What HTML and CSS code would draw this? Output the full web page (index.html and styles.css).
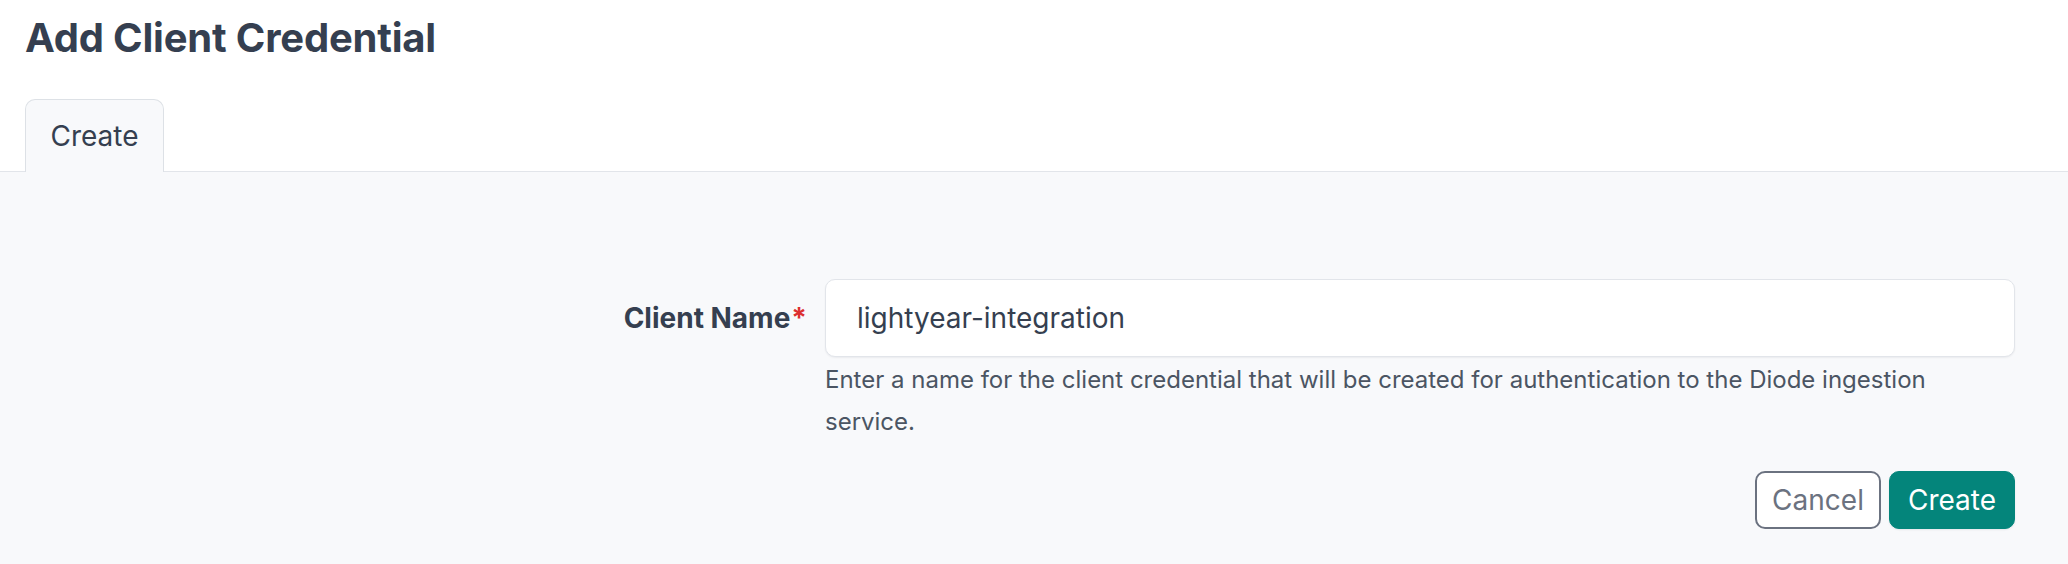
FILE: index.html
```html
<!DOCTYPE html>
<html lang="en">
<head>
<meta charset="utf-8">
<title>Add Client Credential</title>
<link rel="stylesheet" href="styles.css">
</head>
<body>
<div class="page">
  <h1 class="title">Add Client Credential</h1>
  <div class="tabs">
    <div class="tab">Create</div>
  </div>
  <div class="panel">
    <form class="form">
      <label class="label" for="client-name">Client Name<span class="req">*</span></label>
      <div class="field">
        <input id="client-name" class="input" type="text" value="lightyear-integration">
      </div>
      <div></div>
      <p class="help">Enter a name for the client credential that will be created for authentication to the Diode ingestion service.</p>
      <div></div>
      <div class="actions">
        <button type="button" class="btn btn-outline">Cancel</button>
        <button type="button" class="btn btn-primary">Create</button>
      </div>
    </form>
  </div>
</div>
</body>
</html>
```
FILE: styles.css
```css
html, body {
  margin: 0;
  padding: 0;
  background: #ffffff;
}
body {
  font-family: Inter, "Noto Sans", "Liberation Sans", sans-serif;
  color: #374151;
  height: 564px;
  overflow: hidden;
}
.page {
  display: flex;
  flex-direction: column;
  height: 564px;
}
.title {
  margin: 0;
  padding: 14px 25px 0;
  font-size: 40px;
  line-height: 48px;
  font-weight: 700;
  color: #353f50;
  letter-spacing: -0.2px;
}
.tabs {
  display: flex;
  margin-top: 37px;
  padding-left: 25px;
  border-bottom: 1px solid #e2e5ea;
}
.tab {
  margin-bottom: -1px;
  height: 72px;
  width: 137px;
  box-sizing: content-box;
  border: 1px solid #dde1e6;
  border-bottom: none;
  border-radius: 10px 10px 0 0;
  background: #f8f9fb;
  display: flex;
  align-items: center;
  justify-content: center;
  font-size: 28px;
  color: #353f50;
}
.panel {
  flex: 1;
  background: #f8f9fb;
  padding: 107px 53px 0 25px;
}
.form {
  display: grid;
  grid-template-columns: 1fr 1190px;
  column-gap: 18px;
  align-items: center;
}
.label {
  justify-self: end;
  font-size: 28px;
  font-weight: 700;
  color: #353f50;
}
.req {
  color: #dc2f2f;
  margin-left: 1px;
}
.input {
  display: block;
  width: 100%;
  box-sizing: border-box;
  height: 78px;
  border: 1px solid #e2e5ea;
  border-radius: 10px;
  background: #ffffff;
  box-shadow: 0 1px 2px rgba(16, 24, 40, 0.06);
  padding: 0 31px;
  font-family: inherit;
  font-size: 28px;
  color: #353f50;
  outline: none;
}
.help {
  margin: 2px 0 0;
  font-size: 24px;
  line-height: 42px;
  color: #4b5563;
}
.actions {
  display: flex;
  justify-content: flex-end;
  gap: 8px;
  margin-top: 28px;
}
.btn {
  height: 58px;
  box-sizing: border-box;
  border-radius: 10px;
  font-family: inherit;
  font-size: 28px;
  cursor: pointer;
}
.btn-outline {
  padding: 0 15px;
  background: #ffffff;
  border: 2px solid #6b7280;
  color: #6b7280;
}
.btn-primary {
  padding: 0 18px;
  background: #04857b;
  border: 1px solid #04857b;
  color: #ffffff;
  box-shadow: 0 1px 2px rgba(16, 24, 40, 0.08);
}
```
